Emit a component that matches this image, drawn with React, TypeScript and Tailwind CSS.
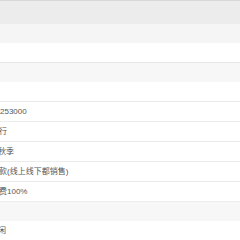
const rows = [
  { text: "", ml: "ml-0" },
  { text: "253000", ml: "ml-0" },
  { text: "行", ml: "-ml-[1px]" },
  { text: "秋季", ml: "-ml-[2px]" },
  { text: "款(线上线下都销售)", ml: "-ml-[1px]" },
  { text: "费100%", ml: "-ml-[1px]" },
];

function Row({ text, ml }: { text: string; ml: string }) {
  return (
    <div className="h-[20px] border-b border-[#ececec] bg-white flex items-center overflow-hidden">
      <span className={`${ml} whitespace-nowrap text-[8px] leading-none text-[#555]`}>{text}</span>
    </div>
  );
}

export default function App() {
  return (
    <div
      className="w-[240px] h-[240px] overflow-hidden bg-white"
      style={{ fontFamily: '"Liberation Sans", "Noto Sans CJK SC", sans-serif' }}>
      <div className="h-[24px] border-t border-[#d8d8d8] bg-[#ececec]" />
      <div className="h-[19px] bg-[#f5f5f5]" />
      <div className="h-[20px] border-b border-[#e6e6e6] bg-white" />
      <div className="h-[19px] bg-[#f7f7f7]" />
      {rows.map((r, i) => (
        <Row key={i} text={r.text} ml={r.ml} />
      ))}
      <div className="h-[19px] bg-[#f7f7f7]" />
      <Row text="闲" ml="-ml-[2px]" />
    </div>
  );
}
